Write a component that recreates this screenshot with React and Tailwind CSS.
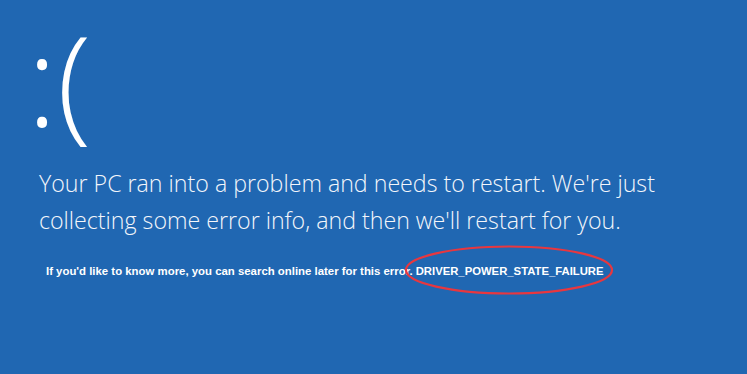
const App = () => {
  return (
    <div className="w-[747px] h-[374px] bg-[#2067b2] text-white overflow-hidden">
      <div className="pl-[27px]">
        <div
          className="text-[126px] leading-[1.25] font-light"
          style={{ fontFamily: '"Open Sans", "DejaVu Sans", sans-serif' }}
        >
          :(
        </div>
      </div>
      <div
        className="pl-[39px] pt-[7.5px] text-[23.2px] leading-[37px] font-light text-[#f3f6fb]"
        style={{ fontFamily: '"Open Sans", "DejaVu Sans", sans-serif' }}
      >
        <p>Your PC ran into a problem and needs to restart. We're just</p>
        <p>collecting some error info, and then we'll restart for you.</p>
      </div>
      <div
        className="pl-[46px] pt-[24px] text-[11.4px] font-bold flex items-center"
        style={{ fontFamily: '"Liberation Sans", Arial, sans-serif' }}
      >
        <span>If you'd like to know more, you can search online later for this error.</span>
        <span className="relative ml-[3px] text-[11.3px]">
          DRIVER_POWER_STATE_FAILURE
          <svg
            className="absolute left-[-12px] top-[-19px]"
            width="210"
            height="52"
            viewBox="0 0 210 52"
          >
            <ellipse cx="105" cy="26" rx="103" ry="23.5" fill="none" stroke="#e8373f" strokeWidth="2.2" />
          </svg>
        </span>
      </div>
    </div>
  );
};

export default App;
